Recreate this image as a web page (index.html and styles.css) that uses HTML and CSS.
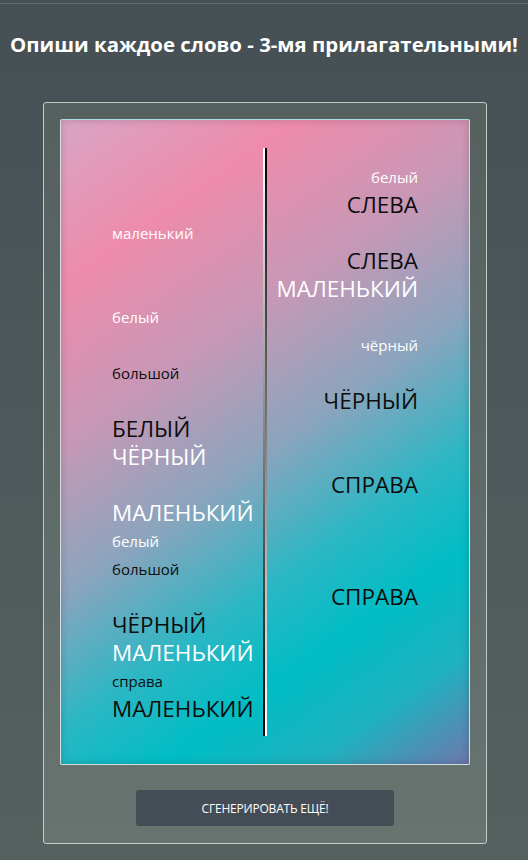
FILE: index.html
```html
<!DOCTYPE html>
<html lang="ru">
<head>
<meta charset="utf-8">
<title>Прилагательные</title>
<link rel="stylesheet" href="styles.css">
</head>
<body>
<div class="topline"></div>
<h1 class="title">Опиши каждое слово - 3-мя прилагательными!</h1>
<div class="panel">
  <div class="card">
    <div class="cols">
      <div class="col col-left">
        <div class="gap"></div>
        <div class="gap"></div>
        <div class="w s white">маленький</div>
        <div class="gap"></div>
        <div class="gap"></div>
        <div class="w s white">белый</div>
        <div class="gap"></div>
        <div class="w s black">большой</div>
        <div class="gap"></div>
        <div class="w b black">БЕЛЫЙ</div>
        <div class="w b white">ЧЁРНЫЙ</div>
        <div class="gap"></div>
        <div class="w b white">МАЛЕНЬКИЙ</div>
        <div class="w s white">белый</div>
        <div class="w s black">большой</div>
        <div class="gap"></div>
        <div class="w b black">ЧЁРНЫЙ</div>
        <div class="w b white">МАЛЕНЬКИЙ</div>
        <div class="w s black">справа</div>
        <div class="w b black">МАЛЕНЬКИЙ</div>
      </div>
      <div class="divider"></div>
      <div class="col col-right">
        <div class="w s white">белый</div>
        <div class="w b black">СЛЕВА</div>
        <div class="gap"></div>
        <div class="w b black">СЛЕВА</div>
        <div class="w b white">МАЛЕНЬКИЙ</div>
        <div class="gap"></div>
        <div class="w s white">чёрный</div>
        <div class="gap"></div>
        <div class="w b black">ЧЁРНЫЙ</div>
        <div class="gap"></div>
        <div class="gap"></div>
        <div class="w b black">СПРАВА</div>
        <div class="gap"></div>
        <div class="gap"></div>
        <div class="gap"></div>
        <div class="w b black">СПРАВА</div>
      </div>
    </div>
  </div>
  <div class="actions">
    <button class="btn" type="button">СГЕНЕРИРОВАТЬ ЕЩЁ!</button>
  </div>
</div>
</body>
</html>
```
FILE: styles.css
```css
html, body {
  margin: 0;
  padding: 0;
}
body {
  width: 528px;
  height: 860px;
  overflow: hidden;
  background: linear-gradient(180deg, #454f54 0%, #4c575a 40%, #55615f 100%);
  font-family: "Open Sans", "Noto Sans", sans-serif;
  color: #fff;
}
.topline {
  height: 3px;
  border-bottom: 1px solid #5e696d;
}
.title {
  margin: 26px 0 0;
  height: 28px;
  line-height: 28px;
  font-size: 20.4px;
  font-weight: 700;
  text-align: center;
  color: #fff;
  letter-spacing: 0;
}
.panel {
  width: 410px;
  margin: 44px 0 0 43px;
  border: 1px solid #c3cbca;
  border-radius: 3px;
  background: linear-gradient(180deg, #56615f 0%, #5e6a68 50%, #68746f 100%);
  padding: 16px 16px 17px;
}
.card {
  height: 644px;
  border: 1px solid #d6dde0;
  border-top-color: #a9dde4;
  border-radius: 2px;
  background: linear-gradient(145deg, #d9a5c4 0%, #ee8bab 18%, #c798b6 35%, #8ca4bd 51%, #2ab7c4 66%, #00bdc4 77%, #1fb1bf 88%, #6e78ad 100%);
  box-shadow: inset 0 0 8px rgba(0, 0, 0, 0.18);
}
.cols {
  display: grid;
  grid-template-columns: 1fr 4px 1fr;
  padding: 28px 0 0;
  height: 588px;
}
.divider {
  height: 588px;
  background:
    linear-gradient(180deg, #fff 0%, #000 100%) left / 2px 100% no-repeat,
    linear-gradient(180deg, #000 0%, #fff 100%) right / 2px 100% no-repeat;
}
.col {
  padding-top: 15px;
}
.col-left {
  padding-left: 51px;
  text-align: left;
}
.col-right {
  padding-right: 51px;
  text-align: right;
}
.gap, .w {
  height: 28px;
  line-height: 28px;
  white-space: nowrap;
}
.s {
  font-size: 15px;
}
.b {
  font-size: 22.5px;
  letter-spacing: 0;
}
.white { color: #fff; }
.black { color: #0d0d0d; }
.actions {
  display: flex;
  justify-content: center;
  padding-top: 25px;
}
.btn {
  width: 258px;
  height: 36px;
  border: 0;
  border-radius: 3px;
  background: #444c55;
  color: #fff;
  font-family: "Open Sans", "Noto Sans", sans-serif;
  font-size: 12px;
  letter-spacing: -0.2px;
  padding: 0;
}
```
